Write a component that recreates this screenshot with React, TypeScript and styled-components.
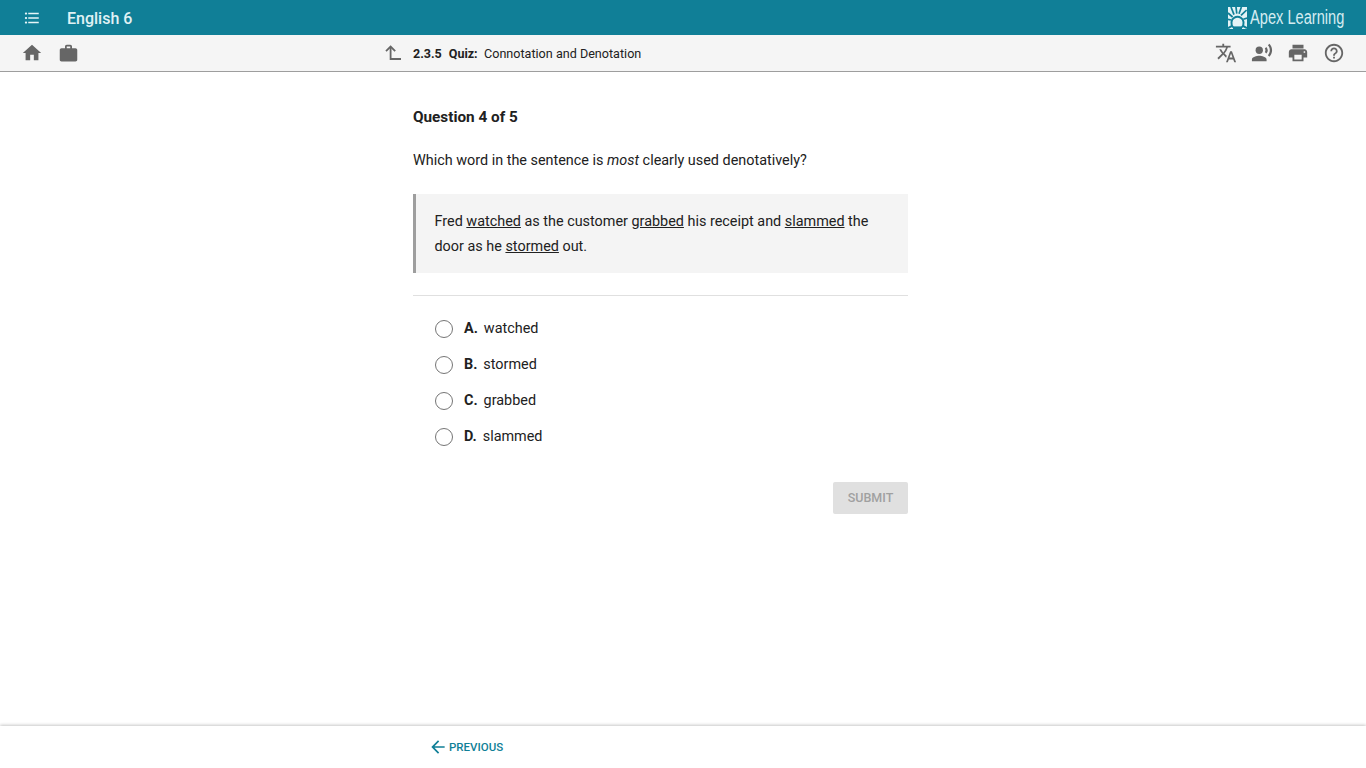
import React from 'react'
import styled, { createGlobalStyle } from 'styled-components'
import {
  MdFormatListBulleted,
  MdHome,
  MdWork,
  MdTranslate,
  MdRecordVoiceOver,
  MdPrint,
  MdHelpOutline,
  MdArrowBack,
} from 'react-icons/md'

const GlobalStyle = createGlobalStyle`
  html, body {
    margin: 0;
    padding: 0;
    height: 100%;
    background: #fff;
    font-family: Roboto, "Liberation Sans", sans-serif;
    color: #212121;
  }
  #root {
    height: 100%;
  }
`

const choices = [
  { letter: 'A.', word: 'watched' },
  { letter: 'B.', word: 'stormed' },
  { letter: 'C.', word: 'grabbed' },
  { letter: 'D.', word: 'slammed' },
]

const ApexMark = () => (
  <svg width="19" height="22" viewBox="0 0 19 22">
    <rect width="19" height="22" fill="#e4f3f6" />
    <g stroke="#107f97" strokeWidth="1.7" fill="none">
      <path d="M3 0 L6 7.6" />
      <path d="M8 0 L8.8 6.6" />
      <path d="M13.4 0 L11 6.8" />
      <path d="M18.6 3 L13 8.4" />
      <path d="M0 6 L4.6 10" />
      <path d="M0 12.4 L3 13" />
      <path d="M19 11 L15.4 12.2" />
      <path d="M5 20.4 C2.6 17.4 3 12.4 6 10.8 C8 9.6 11 9.6 13 10.8 C16 12.4 16.4 17.4 14 20.4" strokeWidth="2" />
      <path d="M0 21.2 L4 18.8" strokeWidth="2" />
      <path d="M19 21.2 L15 18.8" strokeWidth="2" />
    </g>
    <rect x="5" y="19.4" width="9" height="2.6" fill="#107f97" />
  </svg>
)

const UpLevelIcon = () => (
  <svg width="16" height="16" viewBox="0 0 16 16" fill="none" stroke="#666666" strokeWidth="1.8">
    <path d="M1 6.2 L5.6 1.6 L10.2 6.2" />
    <path d="M5.6 2 L5.6 14 L16 14" />
  </svg>
)

export default function App() {
  return (
    <Page>
      <GlobalStyle />
      <TopBar>
        <MenuButton>
          <MdFormatListBulleted size={18} />
        </MenuButton>
        <CourseTitle>English 6</CourseTitle>
        <Logo>
          <ApexMark />
          <LogoText>Apex Learning</LogoText>
        </Logo>
      </TopBar>

      <ToolBar>
        <ToolGroup>
          <ToolIcon><MdHome size={22} /></ToolIcon>
          <ToolIcon><MdWork size={21} /></ToolIcon>
        </ToolGroup>
        <Crumb>
          <UpButton>
            <UpLevelIcon />
          </UpButton>
          <CrumbBold>2.3.5</CrumbBold>
          <CrumbBold>Quiz:</CrumbBold>
          <CrumbTitle>Connotation and Denotation</CrumbTitle>
        </Crumb>
        <ToolGroup>
          <ToolIcon><MdTranslate size={22} /></ToolIcon>
          <ToolIcon><MdRecordVoiceOver size={22} /></ToolIcon>
          <ToolIcon><MdPrint size={22} /></ToolIcon>
          <ToolIcon><MdHelpOutline size={22} /></ToolIcon>
        </ToolGroup>
      </ToolBar>

      <Main>
        <Column>
          <QuestionNumber>Question 4 of 5</QuestionNumber>
          <Prompt>
            Which word in the sentence is <em>most</em> clearly used denotatively?
          </Prompt>
          <Quote>
            Fred <u>watched</u> as the customer <u>grabbed</u> his receipt and{' '}
            <u>slammed</u> the door as he <u>stormed</u> out.
          </Quote>
          <Divider />
          <Choices>
            {choices.map(c => (
              <Choice key={c.letter}>
                <Radio />
                <Letter>{c.letter}</Letter>
                <span>{c.word}</span>
              </Choice>
            ))}
          </Choices>
          <SubmitRow>
            <SubmitButton disabled>SUBMIT</SubmitButton>
          </SubmitRow>
        </Column>
      </Main>

      <Footer>
        <PreviousLink>
          <MdArrowBack size={20} />
          PREVIOUS
        </PreviousLink>
      </Footer>
    </Page>
  )
}

const Page = styled.div`
  height: 100vh;
  display: flex;
  flex-direction: column;
  overflow: hidden;
`

const TopBar = styled.header`
  height: 35px;
  flex-shrink: 0;
  background: #107f97;
  color: #fff;
  display: flex;
  align-items: center;
  padding: 0 22px 0 23px;
`

const MenuButton = styled.div`
  width: 18px;
  height: 18px;
  display: flex;
  color: #e6f5f8;
`

const CourseTitle = styled.div`
  margin-left: 26px;
  font-size: 16px;
  font-weight: 500;
  color: #e0f2f5;
  padding-top: 1px;
`

const Logo = styled.div`
  margin-left: auto;
  display: flex;
  align-items: center;
  gap: 3px;
`

const LogoText = styled.span`
  font-family: "Liberation Sans", sans-serif;
  font-size: 19.5px;
  color: #d4ecf1;
  display: inline-block;
  width: 94px;
  white-space: nowrap;
  transform: scaleX(0.75);
  transform-origin: left center;
`

const ToolBar = styled.div`
  height: 37px;
  flex-shrink: 0;
  box-sizing: border-box;
  background: #f5f5f5;
  border-bottom: 1px solid #9e9e9e;
  display: flex;
  align-items: center;
  justify-content: space-between;
  padding: 0 21px;
  position: relative;
`

const ToolGroup = styled.div`
  display: flex;
  gap: 14px;
`

const ToolIcon = styled.div`
  width: 22px;
  height: 22px;
  display: flex;
  align-items: center;
  justify-content: center;
  color: #666666;
`

const Crumb = styled.div`
  position: absolute;
  left: 413px;
  top: 0;
  height: 36px;
  display: flex;
  align-items: center;
  gap: 7px;
  font-size: 12.6px;
  color: #212121;
`

const CrumbTitle = styled.span`
  margin-left: -0.6px;
`

const UpButton = styled.div`
  position: absolute;
  left: -28px;
  top: 10px;
  display: flex;
`

const CrumbBold = styled.b`
  font-weight: 700;
  color: #212121;
  font-size: 12.5px;
`

const Main = styled.main`
  flex: 1;
  padding: 36px 0 0 413px;
`

const Column = styled.div`
  width: 495px;
`

const QuestionNumber = styled.h2`
  margin: 0;
  font-size: 15.3px;
  line-height: 19px;
  font-weight: 700;
  color: #212121;
`

const Prompt = styled.p`
  margin: 24px 0 0;
  font-size: 14.4px;
  line-height: 19px;
  color: #212121;
`

const Quote = styled.blockquote`
  margin: 24px 0 0;
  box-sizing: border-box;
  height: 79px;
  padding: 15px 30px 0 18.5px;
  background: #f4f4f4;
  border-left: 3px solid #9e9e9e;
  font-size: 14.4px;
  line-height: 25px;
  color: #212121;
`

const Divider = styled.hr`
  margin: 22px 0 0;
  border: none;
  border-top: 1px solid #e0e0e0;
`

const Choices = styled.div`
  margin-top: 21px;
  display: flex;
  flex-direction: column;
  gap: 14px;
  padding-left: 22px;
`

const Choice = styled.label`
  height: 22px;
  display: flex;
  align-items: center;
  font-size: 14.4px;
  color: #212121;
`

const Radio = styled.span`
  box-sizing: border-box;
  width: 18px;
  height: 18px;
  border-radius: 50%;
  border: 1.3px solid #757575;
  background: #fff;
  margin: 2px 11px 0 0;
`

const Letter = styled.b`
  font-weight: 700;
  margin-right: 6px;
`

const SubmitRow = styled.div`
  margin-top: 35px;
  display: flex;
  justify-content: flex-end;
`

const SubmitButton = styled.button`
  width: 75px;
  height: 32px;
  border: none;
  border-radius: 2px;
  background: #e0e0e0;
  color: #a0a0a0;
  font-family: Roboto, sans-serif;
  font-size: 12.5px;
  font-weight: 500;
  padding: 0 0 2px;
`

const Footer = styled.footer`
  height: 42px;
  flex-shrink: 0;
  background: #fff;
  box-shadow: 0 -1px 3px rgba(0, 0, 0, 0.22);
  padding: 11px 0 0 428px;
  box-sizing: border-box;
`

const PreviousLink = styled.a`
  display: inline-flex;
  align-items: center;
  gap: 1px;
  color: #107f97;
  font-size: 11.5px;
  font-weight: 500;
`
